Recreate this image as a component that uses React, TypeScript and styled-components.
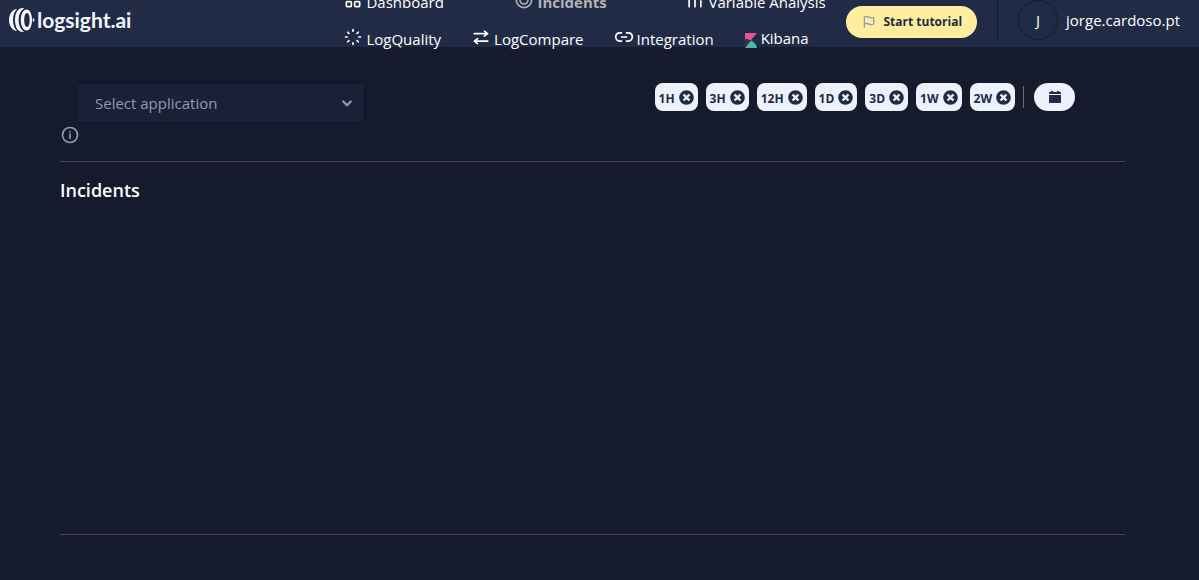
import React from "react";
import styled, { createGlobalStyle } from "styled-components";
import { FaTimesCircle } from "react-icons/fa";

const GlobalStyle = createGlobalStyle`
  * { box-sizing: border-box; }
  body {
    margin: 0;
    background: #151a2d;
    color: #ffffff;
    font-family: "Open Sans", "Noto Sans", sans-serif;
    font-size: 15px;
    line-height: 20px;
  }
  button, select { font-family: inherit; }
`;

const Header = styled.header`
  display: flex;
  align-items: center;
  height: 47px;
  padding: 0 19px 8px 8px;
  background: #222b45;
`;

const Logo = styled.a`
  display: flex;
  flex: 1;
  align-items: center;
  gap: 2px;
  color: #f4f6fb;
  font-family: Lato, sans-serif;
  font-size: 21px;
  font-weight: 700;
  text-decoration: none;
`;

const Nav = styled.nav`
  display: flex;
  flex-direction: column;
  gap: 12px;
  width: 513px;
  padding-top: 2px;
`;

const NavColumns = styled.div`
  display: grid;
  grid-template-columns: repeat(3, 1fr);
`;

const NavLine = styled.div`
  display: flex;
`;

const NavLink = styled.a<{ $active?: boolean }>`
  display: flex;
  align-items: center;
  gap: 3px;
  padding: 0 16px 0 14px;
  color: ${(p) => (p.$active ? "#b3b3b6" : "#ffffff")};
  font-weight: ${(p) => (p.$active ? 700 : 400)};
  text-decoration: none;
  white-space: nowrap;
  svg { flex: none; margin-bottom: 5px; }
`;

const KibanaLink = styled(NavLink)`
  gap: 4px;
  padding: 0 16px 2px 15px;
  svg { margin: 4px 0 0; }
`;

const TutorialButton = styled.button`
  display: flex;
  align-items: center;
  gap: 6px;
  height: 32px;
  margin: 4px 20px 0 4px;
  padding: 0 15px;
  border: 0;
  border-radius: 16px;
  background: #ffeea0;
  color: #222b45;
  font-size: 12px;
  font-weight: 700;
  white-space: nowrap;
  svg { color: #8f9bb3; }
`;

const User = styled.div`
  display: flex;
  align-items: center;
  gap: 8px;
  height: 40px;
  padding-left: 20px;
  border-left: 1px solid #151a30;
`;

const Avatar = styled.span`
  display: flex;
  align-items: center;
  justify-content: center;
  width: 40px;
  height: 40px;
  border: 1px solid #151a30;
  border-radius: 50%;
`;

const Main = styled.main`
  padding: 36px 74px 45px 60px;
`;

const Toolbar = styled.div`
  display: flex;
  justify-content: space-between;
  align-items: flex-start;
  padding: 0 50px 0 16px;
`;

const SelectBox = styled.label`
  display: grid;
  width: 289px;
  align-items: center;
  > * { grid-area: 1 / 1; }
  svg {
    justify-self: end;
    margin-right: 9px;
    color: #8f9bb3;
    pointer-events: none;
  }
`;

const Select = styled.select`
  appearance: none;
  width: 100%;
  height: 40px;
  padding: 0 18px;
  border: 1px solid #101426;
  border-radius: 4px;
  background: #1a2038;
  color: #8f9bb3;
  font-size: 15px;
`;

const Ranges = styled.div`
  display: flex;
  gap: 8px;
  align-items: center;
`;

const RangeChip = styled.button`
  display: flex;
  align-items: center;
  gap: 4px;
  height: 28px;
  padding: 0 4px;
  border: 0;
  border-radius: 8px;
  background: #edf1f9;
  color: #222b45;
  font-size: 12px;
  font-weight: 700;
  span { padding-top: 2px; }
`;

const Separator = styled.span`
  width: 1px;
  height: 22px;
  margin-right: 2px;
  background: #6b6e78;
`;

const CalendarButton = styled.button`
  display: flex;
  align-items: center;
  justify-content: center;
  width: 41px;
  height: 28px;
  padding: 0;
  border: 0;
  border-radius: 14px;
  background: #edf1f9;
  color: #222b45;
`;

const InfoButton = styled.button`
  display: block;
  height: 20px;
  margin: 2px 0 16px;
  padding: 0;
  border: 0;
  background: none;
  color: #8f9bb3;
  svg { display: block; }
`;

const Incidents = styled.section`
  min-height: 374px;
  padding-top: 16px;
  border: solid #45474f;
  border-width: 1px 0;
`;

const Title = styled.h1`
  margin: 0;
  font-size: 18px;
  font-weight: 600;
  line-height: 24px;
`;

type IconProps = { size?: number; weight?: number; children: React.ReactNode };

const LineIcon = ({ size = 20, weight = 2, children }: IconProps) => (
  <svg width={size} height={size} viewBox="0 0 24 24" fill="none" stroke="currentColor" strokeWidth={weight} strokeLinecap="round" strokeLinejoin="round" aria-hidden="true">
    {children}
  </svg>
);

const SolidIcon = ({ size = 20, children }: IconProps) => (
  <svg width={size} height={size} viewBox="0 0 24 24" fill="currentColor" aria-hidden="true">
    {children}
  </svg>
);

const LogoMark = () => (
  <svg width="27" height="26" viewBox="0 0 27 26" aria-hidden="true">
    <path d="M9 2C4.500 2.500 1 7 1 13s3.500 10.500 8 11C6.500 21.500 5 18 5 13S6.500 4.500 9 2z" fill="#f4f6fb" />
    <path d="M14.500 1C9.800 1 7 6 7 13s2.800 12 7.500 12c.6 0 1-.1 1.500-.4C12.600 22.500 10.600 18 10.600 13S12.600 3.500 16 1.400C15.500 1.100 15.100 1 14.500 1z" fill="#f4f6fb" />
    <path fillRule="evenodd" d="M18.600 2.500c3.300 0 5.400 4.500 5.400 10.500s-2.100 10.500-5.400 10.500S12.800 19 12.800 13s2.500-10.500 5.800-10.500zM19 6c-1.700 0-2.800 3-2.800 7s1.100 7 2.800 7 2.700-3 2.700-7-1-7-2.700-7z" fill="#f4f6fb" />
    <path d="M24.800 11c1.200.5 1.700 1.100 1.700 2s-.5 1.500-1.700 2z" fill="#f4f6fb" />
  </svg>
);

const GridIcon = () => (
  <LineIcon>
    <rect x="4" y="4" width="6" height="6" rx="1" />
    <rect x="14" y="4" width="6" height="6" rx="1" />
    <rect x="4" y="14" width="6" height="6" rx="1" />
    <rect x="14" y="14" width="6" height="6" rx="1" />
  </LineIcon>
);

const TargetIcon = () => (
  <LineIcon>
    <circle cx="12" cy="12" r="9.200" />
    <circle cx="12" cy="12" r="4.800" />
  </LineIcon>
);

const BarsIcon = () => (
  <LineIcon>
    <path d="M5 9v11M12 5v15M19 13v7" />
  </LineIcon>
);

const LoaderIcon = () => (
  <LineIcon>
    <path d="M12 3v2M12 19v2M3 12h2M19 12h2" />
    <path d="M5.700 6.300l1.400 1.300M16.900 16.400l1.400 1.300M5.700 17.700l1.400-1.300M16.900 7.600l1.400-1.300" />
  </LineIcon>
);

const SwapIcon = () => (
  <SolidIcon>
    <path d="M4 9h13l-1.600 1.200a1 1 0 0 0-.2 1.400 1 1 0 0 0 .8.400 1 1 0 0 0 .6-.2l4-3a1 1 0 0 0 0-1.590l-3.860-3a1 1 0 0 0-1.230 1.580L17.080 7H4a1 1 0 0 0 0 2z" />
    <path d="M20 16H7l1.600-1.200a1 1 0 0 0-1.200-1.600l-4 3a1 1 0 0 0 0 1.590l3.860 3a1 1 0 0 0 .61.210 1 1 0 0 0 .79-.39 1 1 0 0 0-.17-1.400L6.920 18H20a1 1 0 0 0 0-2z" />
  </SolidIcon>
);

const ChainIcon = () => (
  <SolidIcon>
    <path d="M8 12a1 1 0 0 0 1 1h6a1 1 0 0 0 0-2H9a1 1 0 0 0-1 1z" />
    <path d="M9 16H7.210A4.130 4.130 0 0 1 3 12.370 4 4 0 0 1 7 8h2a1 1 0 0 0 0-2H7.210a6.150 6.150 0 0 0-6.160 5.210A6 6 0 0 0 7 18h2a1 1 0 0 0 0-2z" />
    <path d="M23 11.240A6.160 6.160 0 0 0 16.760 6h-1.510C14.440 6 14 6.450 14 7a1 1 0 0 0 1 1h2a4 4 0 0 1 4 4.370A4.130 4.130 0 0 1 16.790 16H15a1 1 0 0 0 0 2h2a6 6 0 0 0 6-6.760z" />
  </SolidIcon>
);

const KibanaIcon = () => (
  <svg width="12" height="15" viewBox="0 0 12 15" aria-hidden="true">
    <path d="M0 0h12L0 14z" fill="#f04e98" />
    <path d="M0 6c2.500 0 4.500.6 6.300 1.600L0 15z" fill="#343741" />
    <path d="M6.300 7.600C9.500 9.300 11.400 12 12 15H0z" fill="#3ebeb0" />
  </svg>
);

const FlagIcon = () => (
  <SolidIcon size={16}>
    <path d="M19.270 4.680a1.790 1.790 0 0 0-1.600-.25 7.530 7.530 0 0 1-2.170.280 8.540 8.540 0 0 1-3.130-.78A10.150 10.150 0 0 0 8.500 3c-2.890 0-4 1-4.200 1.140a1 1 0 0 0-.3.720V20a1 1 0 0 0 2 0v-4.300a6.280 6.280 0 0 1 2.500-.41 8.540 8.540 0 0 1 3.130.780 10.150 10.150 0 0 0 3.870.930 7.660 7.660 0 0 0 3.500-.7 1.740 1.740 0 0 0 1-1.550V6.110a1.770 1.770 0 0 0-.73-1.430zM18 14.590a6.320 6.320 0 0 1-2.500.410 8.360 8.360 0 0 1-3.120-.79 10.340 10.340 0 0 0-3.880-.92 9.510 9.510 0 0 0-2.500.290V5.420A6.130 6.130 0 0 1 8.500 5a8.360 8.360 0 0 1 3.120.790 10.340 10.340 0 0 0 3.880.920 9.410 9.410 0 0 0 2.500-.3z" />
  </SolidIcon>
);

const CalendarIcon = () => (
  <svg width="12" height="14" viewBox="0 0 12 14" fill="currentColor" aria-hidden="true">
    <path d="M2 1h2v1h4V1h2v1h1c.6 0 1 .4 1 1v1H0V3c0-.6.4-1 1-1h1z" />
    <path d="M0 5h12v7c0 .6-.4 1-1 1H1c-.6 0-1-.4-1-1z" />
  </svg>
);

const ranges = ["1H", "3H", "12H", "1D", "3D", "1W", "2W"];

export default function App() {
  return (
    <>
      <GlobalStyle />
      <Header>
        <Logo href="#">
          <LogoMark />
          logsight.ai
        </Logo>
        <Nav>
          <NavColumns>
            <NavLink href="#dashboard"><GridIcon />Dashboard</NavLink>
            <NavLink href="#incidents" $active><TargetIcon />Incidents</NavLink>
            <NavLink href="#variables"><BarsIcon />Variable Analysis</NavLink>
          </NavColumns>
          <NavLine>
            <NavLink href="#quality"><LoaderIcon />LogQuality</NavLink>
            <NavLink href="#compare"><SwapIcon />LogCompare</NavLink>
            <NavLink href="#integration"><ChainIcon />Integration</NavLink>
            <KibanaLink href="#kibana"><KibanaIcon />Kibana</KibanaLink>
          </NavLine>
        </Nav>
        <TutorialButton type="button"><FlagIcon />Start tutorial</TutorialButton>
        <User>
          <Avatar>J</Avatar>
          jorge.cardoso.pt
        </User>
      </Header>
      <Main>
        <Toolbar>
          <SelectBox>
            <Select aria-label="Application" defaultValue="">
              <option value="">Select application</option>
            </Select>
            <LineIcon size={18} weight={3}><path d="M7 10l5 5 5-5" /></LineIcon>
          </SelectBox>
          <Ranges>
            {ranges.map((range) => (
              <RangeChip key={range} type="button">
                <span>{range}</span>
                <FaTimesCircle size={15} />
              </RangeChip>
            ))}
            <Separator />
            <CalendarButton type="button" aria-label="Choose dates"><CalendarIcon /></CalendarButton>
          </Ranges>
        </Toolbar>
        <InfoButton type="button" aria-label="Information">
          <LineIcon>
            <circle cx="12" cy="12" r="9" />
            <path d="M12 11v5M12 8v0" />
          </LineIcon>
        </InfoButton>
        <Incidents>
          <Title>Incidents</Title>
        </Incidents>
      </Main>
    </>
  );
}
